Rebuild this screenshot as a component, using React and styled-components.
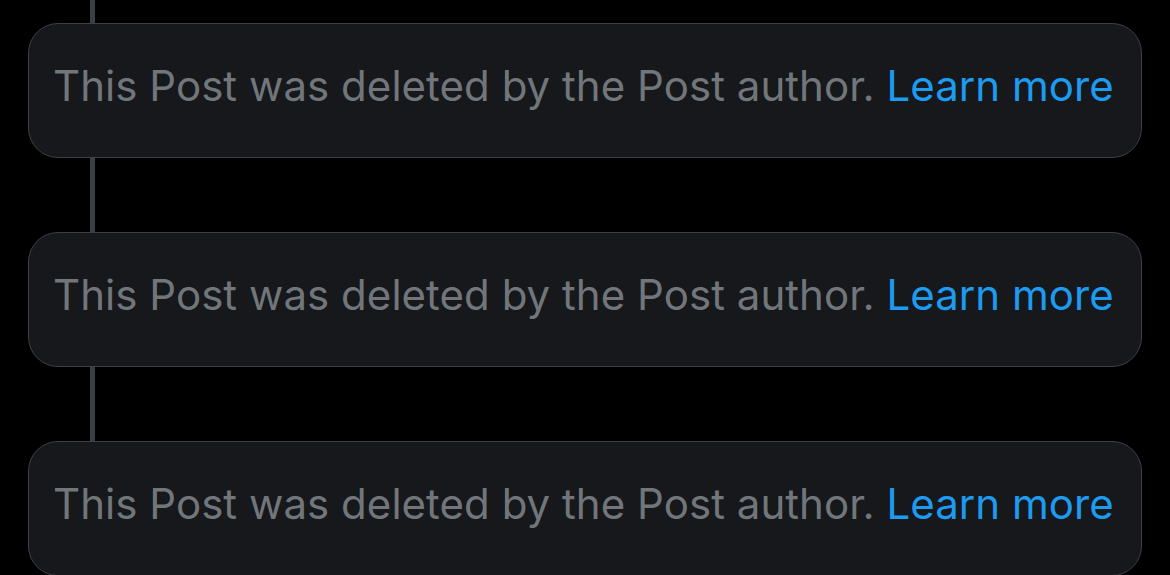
import styled, { createGlobalStyle } from "styled-components"

const GlobalStyle = createGlobalStyle`
    html, body {
        margin: 0;
        padding: 0;
        background: #000;
    }
    body {
        font-family: Inter, "Noto Sans", sans-serif;
        -webkit-font-smoothing: antialiased;
    }
`

const Thread = styled.div`
    display: flex;
    flex-direction: column;
    padding: 0 28px;
    height: 575px;
    overflow: hidden;
`

const Connector = styled.div`
    width: 5px;
    height: ${(p) => p.$height}px;
    margin-left: 62px;
    background: #3b3e42;
    flex-shrink: 0;
`

const DeletedCard = styled.div`
    flex-shrink: 0;
    height: 135px;
    box-sizing: border-box;
    background: #16181c;
    border: 1px solid #3d4044;
    border-radius: 30px;
    padding: 34px 24px 0 24px;
    font-size: 42px;
    line-height: 56px;
    color: #71767b;
    white-space: nowrap;
    letter-spacing: 0.04px;
`

const LearnMore = styled.a`
    color: #1d9bf0;
    text-decoration: none;
`

const posts = [1, 2, 3]

function App() {
    return (
        <>
            <GlobalStyle />
            <Thread>
                {posts.map((id, i) => (
                    <div key={id}>
                        <Connector $height={i === 0 ? 23 : 74} />
                        <DeletedCard>
                            This Post was deleted by the Post author. <LearnMore href="#">Learn more</LearnMore>
                        </DeletedCard>
                    </div>
                ))}
            </Thread>
        </>
    )
}

export default App
